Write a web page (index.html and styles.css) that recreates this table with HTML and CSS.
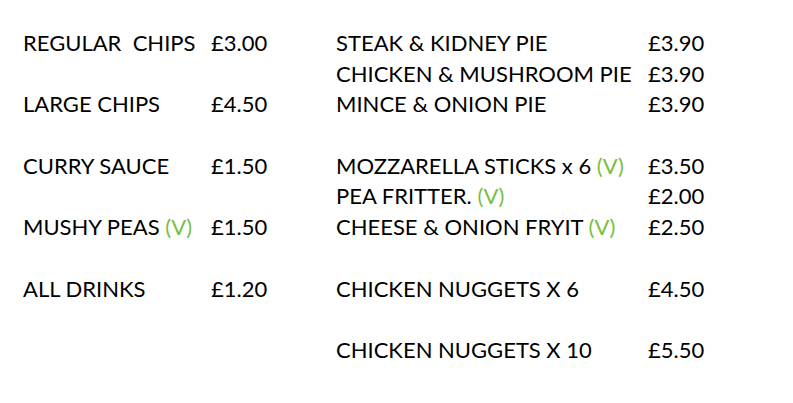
FILE: index.html
```html
<!DOCTYPE html>
<html>
<head>
<meta charset="utf-8">
<link rel="stylesheet" href="styles.css">
</head>
<body>
<div class="menu">
  <div class="col col-left">
    <div class="name">REGULAR&nbsp; CHIPS</div><div class="price">£3.00</div>
    <div class="gap"></div>
    <div class="name">LARGE CHIPS</div><div class="price">£4.50</div>
    <div class="gap"></div>
    <div class="name">CURRY SAUCE</div><div class="price">£1.50</div>
    <div class="gap"></div>
    <div class="name">MUSHY PEAS <span class="veg">(V)</span></div><div class="price">£1.50</div>
    <div class="gap"></div>
    <div class="name">ALL DRINKS</div><div class="price">£1.20</div>
  </div>
  <div class="col col-right">
    <div class="name">STEAK &amp; KIDNEY PIE</div><div class="price">£3.90</div>
    <div class="name">CHICKEN &amp; MUSHROOM PIE</div><div class="price">£3.90</div>
    <div class="name">MINCE &amp; ONION PIE</div><div class="price">£3.90</div>
    <div class="gap"></div>
    <div class="name">MOZZARELLA STICKS x 6 <span class="veg">(V)</span></div><div class="price">£3.50</div>
    <div class="name">PEA FRITTER. <span class="veg">(V)</span></div><div class="price">£2.00</div>
    <div class="name">CHEESE &amp; ONION FRYIT <span class="veg">(V)</span></div><div class="price">£2.50</div>
    <div class="gap"></div>
    <div class="name">CHICKEN NUGGETS X 6</div><div class="price">£4.50</div>
    <div class="gap"></div>
    <div class="name">CHICKEN NUGGETS X 10</div><div class="price">£5.50</div>
  </div>
</div>
</body>
</html>
```

FILE: styles.css
```css
html, body {
  margin: 0;
  padding: 0;
  background: #ffffff;
}
body {
  font-family: "Lato", "Liberation Sans", sans-serif;
  font-size: 22px;
  color: #000000;
}
.menu {
  display: flex;
  padding: 28px 0 0 23px;
}
.col {
  display: grid;
  grid-auto-rows: 30.7px;
  align-items: center;
}
.col-left {
  grid-template-columns: 188px auto;
  width: 313px;
  align-content: start;
}
.col-right {
  grid-template-columns: 312px auto;
  align-content: start;
}
.gap {
  grid-column: 1 / -1;
}
.name, .price {
  white-space: nowrap;
  line-height: 30.7px;
}
.veg {
  color: #77c043;
}
```
